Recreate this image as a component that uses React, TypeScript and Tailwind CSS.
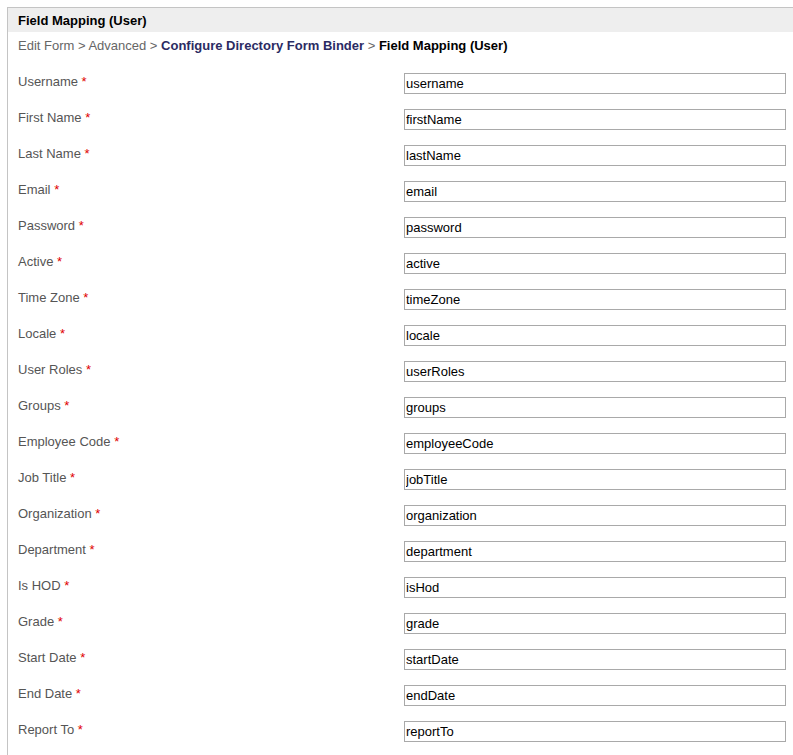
import React from "react";

const rows: [string, string][] = [
  ["Username", "username"],
  ["First Name", "firstName"],
  ["Last Name", "lastName"],
  ["Email", "email"],
  ["Password", "password"],
  ["Active", "active"],
  ["Time Zone", "timeZone"],
  ["Locale", "locale"],
  ["User Roles", "userRoles"],
  ["Groups", "groups"],
  ["Employee Code", "employeeCode"],
  ["Job Title", "jobTitle"],
  ["Organization", "organization"],
  ["Department", "department"],
  ["Is HOD", "isHod"],
  ["Grade", "grade"],
  ["Start Date", "startDate"],
  ["End Date", "endDate"],
  ["Report To", "reportTo"],
];

export default function App() {
  return (
    <div className="bg-white min-h-[755px] pt-[7px] pl-[7px] font-['Liberation_Sans',Arial,sans-serif] text-[13px]">
      <div className="border-t border-l border-[#c4c4c4] min-h-[748px]">
        <div className="bg-[#eeeeee] h-[24px] pl-[10px] pt-[1px] flex items-center font-bold text-black leading-[15px]">
          Field Mapping (User)
        </div>
        <div className="pl-[10px] pt-[6px] h-[35px] leading-[16px] text-[#666666]">
          Edit Form &gt; Advanced &gt;{" "}
          <span className="font-bold text-[#2b2b63]">Configure Directory Form Binder</span> &gt;{" "}
          <span className="font-bold text-black">Field Mapping (User)</span>
        </div>
        <div className="pl-[10px] flex flex-col">
          {rows.map(([label, value]) => (
            <div key={value} className="flex h-[36px] pt-[6px]">
              <div className="w-[386px] shrink-0 pt-[1px] leading-[15px] text-[#555555]">
                {label} <span className="text-[#e00000]">*</span>
              </div>
              <input
                readOnly
                value={value}
                className="w-[382px] h-[21px] border border-[#a9a9a9] px-[1px] text-[13px] text-black outline-none font-['Liberation_Sans',Arial,sans-serif]"
              />
            </div>
          ))}
        </div>
      </div>
    </div>
  );
}
